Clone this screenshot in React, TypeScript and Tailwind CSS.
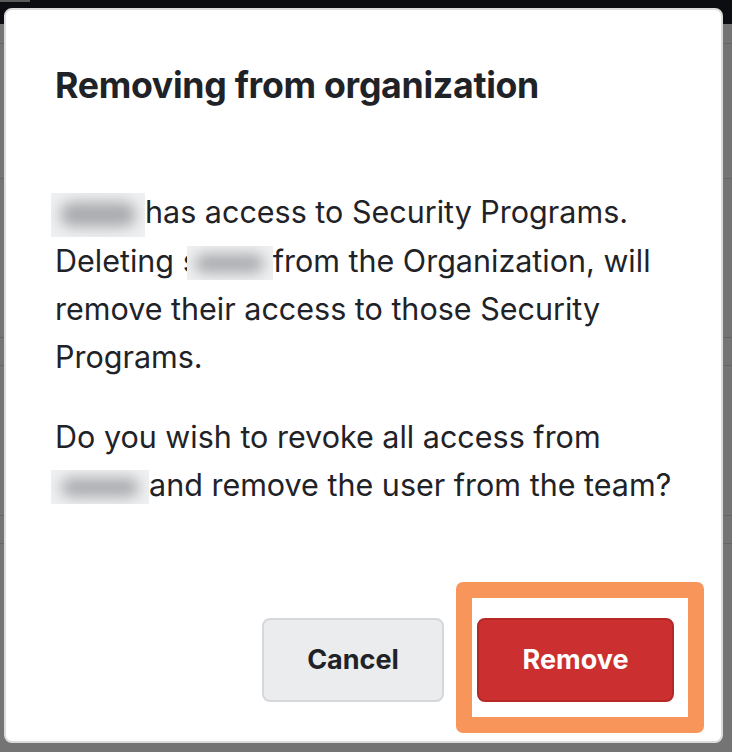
import React from 'react';

// Blurred-out user name placeholder
const Redacted = ({ w, h, className = '' }: { w: string; h: string; className?: string }) => (
  <span className={`relative inline-block overflow-hidden bg-[#eff0f1] align-middle ${w} ${h} ${className}`}>
    <span className="absolute inset-x-[10%] inset-y-[22%] rounded-full bg-[#a9abae] blur-[7px]" />
  </span>
);

const rowLines = [43, 178, 337, 365, 515, 543];

export default function App() {
  return (
    <div className="relative h-[752px] w-[732px] overflow-hidden bg-[#747474] font-['Inter',sans-serif] text-[#1f2328]">
      {/* page behind the overlay */}
      <div className="h-[24px] w-full bg-[#0c0d10]">
        <div className="h-[2px] w-[30px] bg-[#5a5a5a]" />
      </div>
      {rowLines.map(y => (
        <div key={y} className="absolute left-0 right-0 h-px bg-[#666666]" style={{ top: y }} />
      ))}

      {/* modal */}
      <div className="absolute left-[4px] top-[8px] flex h-[735px] w-[719px] flex-col rounded-[8px] border-2 border-[#dcdcdc] bg-white pl-[49px] pr-[47px] pb-[39px] pt-[55px]">
        <h2 className="text-[35.7px] font-bold leading-[40px] tracking-[-0.3px]">Removing from organization</h2>

        <p className="mt-[83px] text-[30.5px] leading-[48px]">
          <Redacted w="w-[94px]" h="h-[44px]" className="-ml-[4px]" />has access to Security Programs.
          Deleting <span className="inline-block w-[4px] overflow-hidden align-bottom">s</span><Redacted w="w-[86px]" h="h-[34px]" />from the Organization, will remove their access to those Security Programs.
        </p>

        <p className="mt-[32px] text-[30.5px] leading-[48px]">
          Do you wish to revoke all access from{' '}
          <Redacted w="w-[98px]" h="h-[34px]" className="-ml-[4px]" />and remove the user from the team?
        </p>

        <div className="mt-auto flex justify-end gap-[33px]">
          <button className="h-[84px] w-[182px] rounded-[8px] border-2 border-[#d5d7da] bg-[#ebecee] text-[27px] font-bold text-[#1f2328]">
            Cancel
          </button>
          <div className="relative">
            <button className="h-[84px] w-[197px] rounded-[8px] border-2 border-[#b52828] bg-[#cc2f2f] text-[27px] font-bold text-white">
              Remove
            </button>
            {/* highlight frame */}
            <div className="pointer-events-none absolute -left-[21px] -right-[30px] -top-[36px] -bottom-[31px] rounded-[7px] border-[16px] border-[#f7955a]" />
          </div>
        </div>
      </div>
    </div>
  );
}
